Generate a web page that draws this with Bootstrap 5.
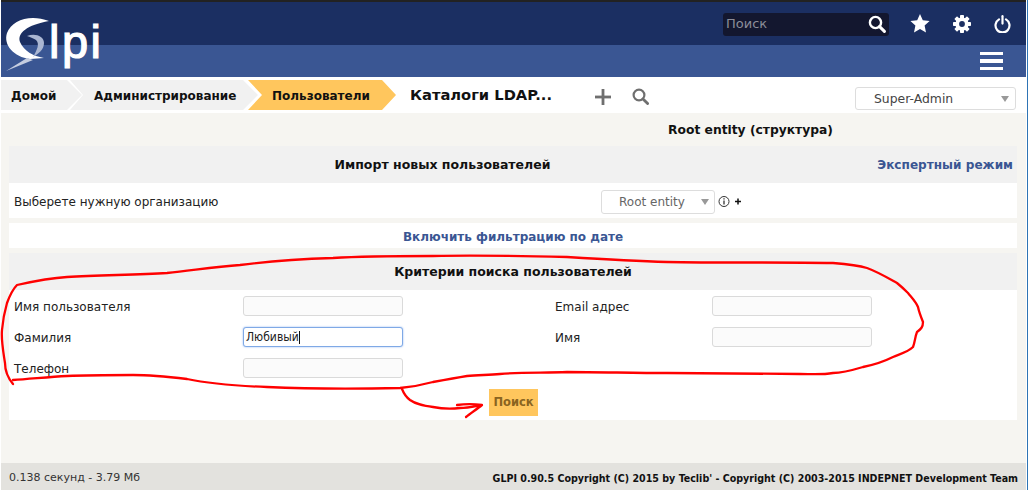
<!DOCTYPE html>
<html lang="en">
<head>
  <meta charset="UTF-8" />
  <title>GLPI - Каталоги LDAP</title>
  <link href="https://cdn.jsdelivr.net/npm/bootstrap@5.3.0/dist/css/bootstrap.min.css" rel="stylesheet" />
  <style>
    html, body { height: 490px; overflow: hidden; }
    body {
      font-family: "DejaVu Sans", Verdana, sans-serif;
      font-size: 12px;
      color: #222;
      background: #fff;
      position: relative;
      border-right: 1px solid #2e74b5;
    }
    .app-shell { height: 490px; margin-right: 1px; margin-left: 1px; }
    /* header */
    .top-bar { height: 45px; background: #1b2f62; border-top: 2px solid #222; padding-right: 15px; }
    .sub-bar { height: 32px; background: #3a5693; padding-right: 23px; }
    .search-box { width: 166px; height: 23px; margin-top: 1px; background: #13172f; border-radius: 3px; color: #8b8d99; font-size: 13px; padding: 0 3px 0 3px; margin-right: 21px; }
    .top-icons { gap: 23px; }
    .top-icons svg, .search-box svg { display: block; }
    .burger { width: 23px; height: 19px; }
    .burger i { display: block; height: 3.6px; background: #fff; margin-bottom: 4px; }
    .logo-mark { position: absolute; left: 0; top: 8px; }
    .logo-text { font-family: "Liberation Sans", Arial, sans-serif; font-size: 47px; fill: #fff; stroke: #fff; stroke-width: 1.2px; letter-spacing: 2.5px; }
    /* breadcrumb row */
    .crumb-row { height: 36px; padding-top: 3px; background: #fff; }
    .crumb { height: 30px; padding-top: 1px; font-weight: 700; font-size: 12px; color: #111; background: #f1f1f1; display: flex; align-items: center; }
    .crumb-first { width: 81px; padding-left: 10px; clip-path: polygon(0 0, 66px 0, 100% 50%, 66px 100%, 0 100%); }
    .crumb-mid { width: 188px; margin-left: -12px; padding-left: 24px; clip-path: polygon(0 0, 173px 0, 100% 50%, 173px 100%, 0 100%, 13px 50%); }
    .crumb-active { width: 148px; margin-left: -10px; padding-left: 24px; background: #ffc65d; clip-path: polygon(0 0, 134px 0, 100% 50%, 134px 100%, 0 100%, 14px 50%); }
    .page-title { font-size: 14.7px; font-weight: 700; color: #111; margin-left: 14px; width: 185px; white-space: nowrap; line-height: 1; margin-top: 8px; }
    .tool-plus { margin-top: 9px; }
    .tool-find { margin-top: 8px; margin-left: 21px; }
    .profile-select { width: 161px; height: 23px; margin-left: auto; margin-right: 10px; margin-top: 7px; }
    .fake-select { border: 1px solid #ddd; border-radius: 3px; background: #fff; color: #444; }
    .fake-select b { width: 0; height: 0; border-left: 4px solid transparent; border-right: 4px solid transparent; border-top: 6px solid #999; }
    .profile-select span { margin-left: 18px; margin-top: 1px; font-size: 12.4px; }
    .profile-select b { margin-left: auto; margin-right: 6px; }
    /* content */
    .page-body { height: 350px; background: #f6f5f1; padding: 0 9px 0 8px; }
    .entity-line { height: 33px; padding: 2px 0 0 475px; font-weight: 700; color: #111; font-size: 12.3px; }
    .panel-head { height: 37px; padding-top: 1px; background: #f1f1f1; font-weight: 700; color: #111; font-size: 12.5px; position: relative; }
    .head-import { padding-right: 141px; }
    .expert-link { position: absolute; right: 4px; top: 10px; color: #3a5693; text-decoration: none; font-size: 12.1px; font-weight: 700; }
    .panel-white { background: #fff; }
    .org-row { height: 35px; padding: 2px 0 0 5px; margin-bottom: 5px; }
    .org-label { width: 587px; }
    .org-select { width: 114px; height: 24px; }
    .org-select span { margin-left: 17px; margin-top: 1px; color: #666; }
    .org-select b { margin-left: auto; margin-right: 5px; }
    .org-icons { margin-left: 3px; }
    .date-row { height: 25px; margin-bottom: 5px; padding-top: 2px; }
    .date-row a { color: #3a5693; font-weight: 700; text-decoration: none; }
    .form-panel { height: 130px; }
    .form-grid { display: grid; grid-template-columns: 229px 312px 157px 160px; row-gap: 11px; padding: 6px 0 0 5px; align-items: center; }
    .form-grid label { padding-top: 3px; line-height: 17px; }
    .form-grid .form-control { width: 160px; height: 20px; min-height: 0; padding: 0 2px; border: 1px solid #dadada; border-radius: 3px; font-size: 12px; font-family: "DejaVu Sans Condensed", "Liberation Sans", sans-serif; background: #fbfbfb; color: #222; box-shadow: none; }
    .form-grid .form-control.is-focused { border: 1px solid #7fa9e6; box-shadow: 0 0 2px #8db4ef; background: #fff; }
    .caret-line { display: inline-block; width: 1px; height: 13px; background: #111; vertical-align: middle; }
    .btn-row { padding-top: 11px; margin-left: 1px; }
    .search-btn { background: #ffc65d; color: #8a6420; font-weight: 700; font-size: 11.5px; width: 49px; height: 27px; border: 0; border-radius: 0; padding: 0; }
    .search-btn:hover { background: #ffc65d; color: #8a6420; }
    /* footer */
    .page-foot { height: 27px; background: #e3e2de; padding: 4px 8px 0 8px; font-size: 11px; color: #333; }
    .foot-right { font-weight: 700; font-size: 10.6px; font-family: "DejaVu Sans Condensed", "DejaVu Sans", sans-serif; font-stretch: condensed; color: #111; }
    .scribble { position: absolute; left: 0; top: 0; pointer-events: none; }
  </style>
</head>
<body>
  <div class="app-shell d-flex flex-column">
    <!-- header -->
    <div class="top-bar d-flex align-items-center justify-content-end">
      <div class="search-box d-flex align-items-center justify-content-between">
        <span>Поиск</span>
        <svg width="18" height="18" viewBox="0 0 18 18" fill="none" stroke="#fff"><circle cx="7.5" cy="7.5" r="5.6" stroke-width="2.4"/><path d="M11.6 11.6 16.4 16.4" stroke-width="3" stroke-linecap="round"/></svg>
      </div>
      <div class="top-icons d-flex align-items-center">
        <svg width="20" height="19" viewBox="0 0 20 19" fill="#fff"><path d="M10 0 12.8 6.2 19.6 7 14.6 11.6 16 18.4 10 15 4 18.4 5.4 11.6 .4 7 7.2 6.2Z"/></svg>
        <svg width="18" height="18" viewBox="0 0 18 18"><g fill="#fff"><circle cx="9" cy="9" r="6.6"/><rect x="7" y="0" width="4" height="18" rx=".8"/><rect x="7" y="0" width="4" height="18" rx=".8" transform="rotate(45 9 9)"/><rect x="7" y="0" width="4" height="18" rx=".8" transform="rotate(90 9 9)"/><rect x="7" y="0" width="4" height="18" rx=".8" transform="rotate(135 9 9)"/></g><circle cx="9" cy="9" r="2.9" fill="#1b2f62"/></svg>
        <svg width="17" height="18" viewBox="0 0 17 18" fill="none" stroke="#fff" stroke-width="2.2" stroke-linecap="round"><path d="M5 4.4A7 7 0 1 0 12 4.4"/><path d="M8.5 1.2V8.6"/></svg>
      </div>
    </div>
    <div class="sub-bar d-flex align-items-center justify-content-end">
      <div class="burger"><i></i><i></i><i class="mb-0"></i></div>
    </div>
    <!-- breadcrumb -->
    <div class="crumb-row d-flex align-items-start">
      <div class="crumb crumb-first">Домой</div>
      <div class="crumb crumb-mid">Администрирование</div>
      <div class="crumb crumb-active">Пользователи</div>
      <div class="page-title">Каталоги LDAP...</div>
      <svg class="tool-plus" width="16" height="16" viewBox="0 0 16 16" fill="#6f6f6f"><rect x="6.6" y="0" width="2.8" height="16"/><rect x="0" y="6.6" width="16" height="2.8"/></svg>
      <svg class="tool-find" width="17" height="17" viewBox="0 0 17 17" fill="none" stroke="#6f6f6f"><circle cx="7" cy="7" r="5.4" stroke-width="2.2"/><path d="M11 11 15.6 15.6" stroke-width="2.8" stroke-linecap="round"/></svg>
      <div class="fake-select profile-select d-flex align-items-center"><span>Super-Admin</span><b></b></div>
    </div>
    <!-- content -->
    <div class="page-body">
      <div class="entity-line d-flex align-items-center justify-content-center">Root entity (структура)</div>
      <div class="panel-head head-import d-flex align-items-center justify-content-center">Импорт новых пользователей<a class="expert-link" href="#">Экспертный режим</a></div>
      <div class="panel-white org-row d-flex align-items-center">
        <span class="org-label">Выберете нужную организацию</span>
        <div class="fake-select org-select d-flex align-items-center"><span>Root entity</span><b></b></div>
        <svg class="org-icons" width="26" height="13" viewBox="0 0 26 13" fill="none" stroke="#333"><circle cx="6" cy="6.5" r="5"/><path d="M6 5.6V9.6M6 3.2V4.4" stroke-width="1.3"/><path d="M17 6.5H23M20 3.5V9.5" stroke="#111" stroke-width="1.5"/></svg>
      </div>
      <div class="panel-white date-row d-flex align-items-center justify-content-center"><a href="#">Включить фильтрацию по дате</a></div>
      <div class="panel-head d-flex align-items-center justify-content-center">Критерии поиска пользователей</div>
      <div class="panel-white form-panel">
        <div class="form-grid">
          <label>Имя пользователя</label><input class="form-control" type="text">
          <label>Email адрес</label><input class="form-control" type="text">
          <label>Фамилия</label><div class="form-control is-focused d-flex align-items-center">Любивый<span class="caret-line"></span></div>
          <label>Имя</label><input class="form-control" type="text">
          <label>Телефон</label><input class="form-control" type="text">
        </div>
        <div class="btn-row d-flex justify-content-center"><button class="btn search-btn" type="button">Поиск</button></div>
      </div>
    </div>
    <!-- footer -->
    <div class="page-foot d-flex align-items-center justify-content-between">
      <span>0.138 секунд - 3.79 Мб</span>
      <span class="foot-right">GLPI 0.90.5 Copyright (C) 2015 by Teclib' - Copyright (C) 2003-2015 INDEPNET Development Team</span>
    </div>
  </div>

  <!-- logo sits across both header bars -->
  <svg class="logo-mark" width="110" height="65" viewBox="0 8 110 65">
    <path d="M49 21C30 14 12 20 7 33 3 45 14 57 30 59L44 58C33 56 24 51 20 42 17 33 27 25 49 21Z" fill="#fff"/>
    <path d="M27 36C35 33 44 36 44 43 44 50 38 54 33 57 37 50 40 44 36 40 33 38 30 37 27 36Z" fill="#aab6d2"/>
    <path d="M6 71 27 58 33 60Z" fill="#c5cde0"/>
    <text class="logo-text" x="49" y="58">lpi</text>
  </svg>

  <!-- hand drawn annotation on the screenshot -->
  <svg class="scribble" width="1028" height="490" viewBox="0 0 1028 490" fill="none" stroke="#f00" stroke-width="2.3" stroke-linejoin="round" stroke-linecap="round">
    <path d="M13 384C8 378 5 370 5 363 3 350 1 340 2 330 3 318 5 310 7 303 10 295 13 289 17 285 35 281 50 278 67 277 100 275 135 275 167 273 195 270 215 267 240 265 270 261 300 259 333 258 365 256 400 256 433 256 480 255 525 256 567 257 600 259 635 261 667 262 720 263 780 262 833 263 845 264 857 265 867 268 878 272 888 278 897 283 902 287 905 290 908 293 912 298 916 302 918 307 919 312 921 317 923 322 923 327 921 329 917 332 915 337 915 342 913 347 908 352 900 354 893 357 883 362 873 365 863 367 853 370 843 373 833 373 822 375 811 374 800 374 755 374 711 373 667 373 634 373 600 372 567 372 545 373 522 372 500 374 488 375 478 375 467 376 455 378 444 380 433 382 422 385 411 387 400 388 355 389 311 389 267 387 240 386 210 384 187 379 170 377 150 375 133 375 110 375 88 375 67 376 48 377 30 379 13 380"/>
    <path d="M402 389C404 394 406 397 410 400 417 405 425 406 433 407 443 409 452 409 460 408 468 408 476 406 482 405M457 405C465 404 474 404 482 405 477 409 471 413 466 417"/>
  </svg>

  <script src="https://cdn.jsdelivr.net/npm/bootstrap@5.3.0/dist/js/bootstrap.bundle.min.js"></script>
</body>
</html>
